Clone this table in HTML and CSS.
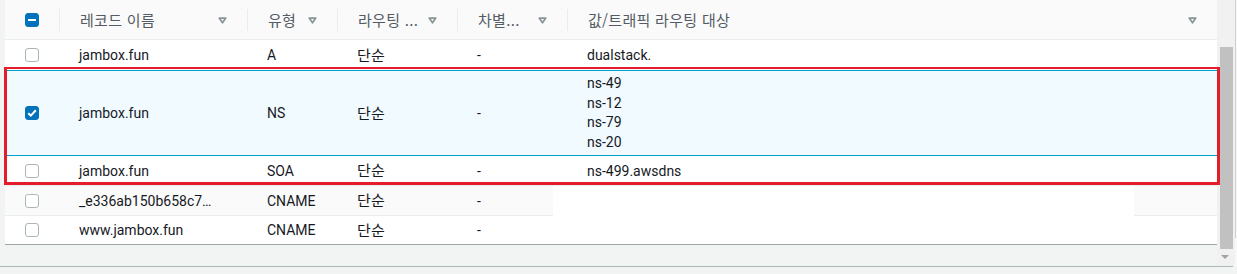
FILE: index.html
```html
<!DOCTYPE html>
<html lang="ko">
<head>
<meta charset="utf-8">
<title>레코드</title>
<link rel="stylesheet" href="styles.css">
</head>
<body>
<div class="screen">
  <div class="main">
    <div class="gutter"></div>
    <div class="pane">
      <table class="records">
        <colgroup>
          <col class="c-check"><col class="c-name"><col class="c-type"><col class="c-route"><col class="c-diff"><col class="c-value">
        </colgroup>
        <thead>
          <tr>
            <th class="th-check"><span class="cb cb-on"><span class="dash"></span></span></th>
            <th><div class="hcell"><span class="ko">레코드 이름</span><svg class="filt" width="9" height="7" viewBox="0 0 9 7"><path d="M1.2 1.1h6.6L4.5 5.8z" fill="none" stroke="#879596" stroke-width="1.7" stroke-linejoin="round"/></svg></div></th>
            <th><div class="hcell"><span class="ko">유형</span><svg class="filt" width="9" height="7" viewBox="0 0 9 7"><path d="M1.2 1.1h6.6L4.5 5.8z" fill="none" stroke="#879596" stroke-width="1.7" stroke-linejoin="round"/></svg></div></th>
            <th><div class="hcell"><span class="ko">라우팅 ...</span><svg class="filt" width="9" height="7" viewBox="0 0 9 7"><path d="M1.2 1.1h6.6L4.5 5.8z" fill="none" stroke="#879596" stroke-width="1.7" stroke-linejoin="round"/></svg></div></th>
            <th><div class="hcell"><span class="ko">차별...</span><svg class="filt" width="9" height="7" viewBox="0 0 9 7"><path d="M1.2 1.1h6.6L4.5 5.8z" fill="none" stroke="#879596" stroke-width="1.7" stroke-linejoin="round"/></svg></div></th>
            <th><div class="hcell"><span class="ko">값/트래픽 라우팅 대상</span><svg class="filt" width="9" height="7" viewBox="0 0 9 7"><path d="M1.2 1.1h6.6L4.5 5.8z" fill="none" stroke="#879596" stroke-width="1.7" stroke-linejoin="round"/></svg></div></th>
          </tr>
        </thead>
        <tbody>
          <tr class="r-first">
            <td class="td-check"><span class="cb"></span></td>
            <td>jambox.fun</td><td>A</td><td><span class="ko">단순</span></td><td>-</td><td>dualstack.</td>
          </tr>
          <tr class="r-sel">
            <td class="td-check"><span class="cb cb-on"><svg width="10" height="8" viewBox="0 0 10 8"><path d="M1.2 4.2l2.6 2.4L8.8 1.2" fill="none" stroke="#fff" stroke-width="2"/></svg></span></td>
            <td>jambox.fun</td><td>NS</td><td><span class="ko">단순</span></td><td>-</td>
            <td class="multi"><span class="line">ns-49</span><span class="line">ns-12</span><span class="line">ns-79</span><span class="line">ns-20</span></td>
          </tr>
          <tr class="r-after">
            <td class="td-check"><span class="cb"></span></td>
            <td>jambox.fun</td><td>SOA</td><td><span class="ko">단순</span></td><td>-</td><td>ns-499.awsdns</td>
          </tr>
          <tr class="r-stripe">
            <td class="td-check"><span class="cb"></span></td>
            <td>_e336ab150b658c7…</td><td>CNAME</td><td><span class="ko">단순</span></td><td>-</td><td></td>
          </tr>
          <tr class="r-last">
            <td class="td-check"><span class="cb"></span></td>
            <td>www.jambox.fun</td><td>CNAME</td><td><span class="ko">단순</span></td><td>-</td><td></td>
          </tr>
        </tbody>
      </table>
      <div class="redact"></div>
      <div class="annot"></div>
    </div>
    <div class="scrollbar">
      <div class="thumb"></div>
      <div class="arrow"></div>
    </div>
    <div class="edge"></div>
  </div>
  <div class="footer"></div>
</div>
</body>
</html>
```

FILE: styles.css
```css
* { box-sizing: border-box; }
html, body { margin: 0; padding: 0; }
body {
  background: #f2f3f3;
  font-family: Roboto, "Noto Sans CJK KR", sans-serif;
  font-size: 14px;
  color: #16191f;
  overflow: hidden;
}
.ko { font-family: "Noto Sans CJK KR", sans-serif; font-size: 15px; letter-spacing: 0.3px; }
.screen { width: 1237px; height: 274px; display: flex; flex-direction: column; }
.main { display: flex; height: 266px; }
.gutter { width: 5px; background: #f2f3f3; }
.pane { width: 1212px; position: relative; background: #f2f3f3; }

.records {
  width: 1212px;
  table-layout: fixed;
  border-collapse: separate;
  border-spacing: 0;
  background: #fff;
}
.c-check { width: 54px; }
.c-name { width: 188px; }
.c-type { width: 90px; }
.c-route { width: 120px; }
.c-diff { width: 110px; }
.c-value { width: 650px; }

thead th {
  background: #fafafa;
  height: 40px;
  padding: 8px 0 8px 0;
  border-bottom: 1px solid #eaeded;
  font-weight: 400;
  color: #545b64;
  text-align: left;
  vertical-align: middle;
}
.th-check { padding-left: 20px; }
.hcell {
  display: flex;
  align-items: center;
  justify-content: space-between;
  height: 22px;
  border-left: 1px solid #eaeded;
  padding: 0 20px 0 20px;
  white-space: nowrap;
  line-height: 22px;
}
.filt { display: block; margin-top: 2px; flex: none; }

tbody td {
  padding: 0 0 0 20px;
  white-space: nowrap;
  vertical-align: middle;
  border-top: 1px solid #eaeded;
  overflow: hidden;
  line-height: 20px;
}
.td-check { padding-left: 20px; }
.r-first td { border-top: 0; height: 30px; }
.r-sel td { background: #f1faff; border-top: 1px solid #00a1c9; height: 85px; }
.r-after td { border-top: 1px solid #00a1c9; height: 30px; }
.r-stripe td { background: #fafafa; height: 30px; }
.r-last td { height: 30px; border-bottom: 1px solid #9aa4a6; }

.cb {
  display: flex;
  align-items: center;
  justify-content: center;
  width: 14px;
  height: 14px;
  border: 1px solid #aab7b8;
  border-radius: 3px;
  background: #fff;
}
.cb-on { background: #0073bb; border-color: #0073bb; }
.dash { width: 8px; height: 2px; background: #fff; }
.cb svg { display: block; }

.multi { line-height: 19.5px; padding-top: 3px; padding-bottom: 3px; }
.line { display: block; white-space: nowrap; }

.redact {
  position: absolute;
  left: 548px;
  top: 186px;
  width: 581px;
  height: 30px;
  background: #fff;
}
.annot {
  position: absolute;
  left: -1px;
  top: 67px;
  width: 1216px;
  height: 118px;
  border: 3px solid #e31e2a;
  border-top-width: 2px;
}

.scrollbar {
  width: 16px;
  background: #f1f1f1;
  display: flex;
  flex-direction: column;
  align-items: center;
}
.thumb { width: 13px; margin-left: 3px; margin-top: 47px; height: 202px; background: #c1c1c1; }
.arrow {
  margin-top: 6px;
  width: 0; height: 0;
  border-left: 4px solid transparent;
  border-right: 4px solid transparent;
  border-top: 4px solid #a3a3a3;
}
.edge {
  width: 4px;
  background: #f8f8f8;
  border-left: 2px solid #f1f1f1;
}
.edge::after {
  content: "";
  display: block;
  width: 1px;
  height: 238px;
  background: #cfcfcf;
}
.footer {
  flex: 1;
  border-top: 1px solid #aab7b8;
  width: 1233px;
  background: #f2f3f3;
}
```
